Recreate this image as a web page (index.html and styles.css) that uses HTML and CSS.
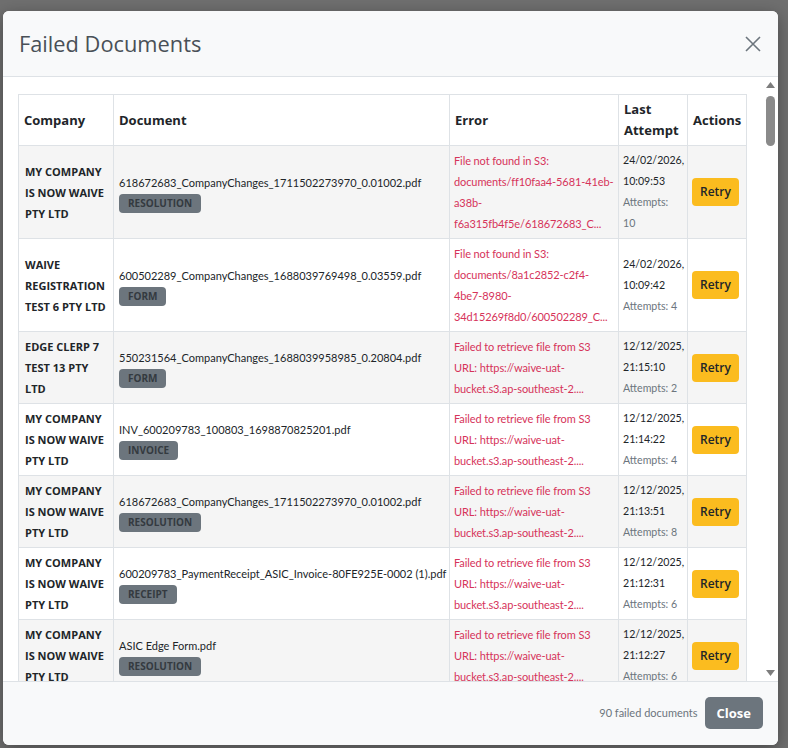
FILE: index.html
```html
<!DOCTYPE html>
<html lang="en">
<head>
    <meta charset="UTF-8">
    <title>Failed Documents</title>
    <link rel="stylesheet" href="styles.css">
</head>
<body>
    <div class="modal">
        <div class="modal_header">
            <h5>Failed Documents</h5>
            <svg class="close_x" width="16" height="16" viewBox="0 0 16 16">
                <path d="M1 1L15 15M15 1L1 15" stroke="#6c757d" stroke-width="1.6" fill="none"/>
            </svg>
        </div>

        <div class="modal_body">
            <div class="scroll">
                <table>
                    <colgroup>
                        <col style="width:95px">
                        <col style="width:336px">
                        <col style="width:169px">
                        <col style="width:69px">
                        <col style="width:59px">
                    </colgroup>
                    <thead>
                        <tr>
                            <th>Company</th>
                            <th>Document</th>
                            <th>Error</th>
                            <th>Last Attempt</th>
                            <th>Actions</th>
                        </tr>
                    </thead>
                    <tbody>
                        <tr>
                            <td class="company">MY COMPANY IS NOW WAIVE PTY LTD</td>
                            <td class="doc">618672683_CompanyChanges_1711502273970_0.01002.pdf<span class="badge">Resolution</span></td>
                            <td class="err">File not found in S3: documents/ff10faa4-5681-41eb-a38b-f6a315fb4f5e/618672683_C...</td>
                            <td class="when">24/02/2026, 10:09:53<div class="attempts">Attempts: 10</div></td>
                            <td><button class="retry">Retry</button></td>
                        </tr>
                        <tr>
                            <td class="company">WAIVE REGISTRATION TEST 6 PTY LTD</td>
                            <td class="doc">600502289_CompanyChanges_1688039769498_0.03559.pdf<span class="badge">Form</span></td>
                            <td class="err">File not found in S3: documents/8a1c2852-c2f4-4be7-8980-34d15269f8d0/600502289_C...</td>
                            <td class="when">24/02/2026, 10:09:42<div class="attempts">Attempts: 4</div></td>
                            <td><button class="retry">Retry</button></td>
                        </tr>
                        <tr>
                            <td class="company">EDGE CLERP 7 TEST 13 PTY LTD</td>
                            <td class="doc">550231564_CompanyChanges_1688039958985_0.20804.pdf<span class="badge">Form</span></td>
                            <td class="err">Failed to retrieve file from S3 URL: https://waive-uat-bucket.s3.ap-southeast-2....</td>
                            <td class="when">12/12/2025, 21:15:10<div class="attempts">Attempts: 2</div></td>
                            <td><button class="retry">Retry</button></td>
                        </tr>
                        <tr>
                            <td class="company">MY COMPANY IS NOW WAIVE PTY LTD</td>
                            <td class="doc">INV_600209783_100803_1698870825201.pdf<span class="badge">Invoice</span></td>
                            <td class="err">Failed to retrieve file from S3 URL: https://waive-uat-bucket.s3.ap-southeast-2....</td>
                            <td class="when">12/12/2025, 21:14:22<div class="attempts">Attempts: 4</div></td>
                            <td><button class="retry">Retry</button></td>
                        </tr>
                        <tr>
                            <td class="company">MY COMPANY IS NOW WAIVE PTY LTD</td>
                            <td class="doc">618672683_CompanyChanges_1711502273970_0.01002.pdf<span class="badge">Resolution</span></td>
                            <td class="err">Failed to retrieve file from S3 URL: https://waive-uat-bucket.s3.ap-southeast-2....</td>
                            <td class="when">12/12/2025, 21:13:51<div class="attempts">Attempts: 8</div></td>
                            <td><button class="retry">Retry</button></td>
                        </tr>
                        <tr>
                            <td class="company">MY COMPANY IS NOW WAIVE PTY LTD</td>
                            <td class="doc">600209783_PaymentReceipt_ASIC_Invoice-80FE925E-0002 (1).pdf<span class="badge">Receipt</span></td>
                            <td class="err">Failed to retrieve file from S3 URL: https://waive-uat-bucket.s3.ap-southeast-2....</td>
                            <td class="when">12/12/2025, 21:12:31<div class="attempts">Attempts: 6</div></td>
                            <td><button class="retry">Retry</button></td>
                        </tr>
                        <tr>
                            <td class="company">MY COMPANY IS NOW WAIVE PTY LTD</td>
                            <td class="doc">ASIC Edge Form.pdf<span class="badge">Resolution</span></td>
                            <td class="err">Failed to retrieve file from S3 URL: https://waive-uat-bucket.s3.ap-southeast-2....</td>
                            <td class="when">12/12/2025, 21:12:27<div class="attempts">Attempts: 6</div></td>
                            <td><button class="retry">Retry</button></td>
                        </tr>
                    </tbody>
                </table>
            </div>
            <div class="scrollbar">
                <svg width="15" height="12" viewBox="0 0 15 12"><path d="M3 11L7.5 5L12 11Z" fill="#7d7d7d"/></svg>
                <div class="thumb"></div>
                <div class="spacer"></div>
                <svg width="15" height="12" viewBox="0 0 15 12"><path d="M3 3L12 3L7.5 9Z" fill="#7d7d7d"/></svg>
            </div>
        </div>

        <div class="modal_footer">
            <span class="count">90 failed documents</span>
            <button class="close_btn">Close</button>
        </div>
    </div>
</body>
</html>
```

FILE: styles.css
```css
*{
    box-sizing: border-box;
}

body{
    margin: 0;
    background-color: #6f6f6f;
    font-family: Lato, "Open Sans", sans-serif;
    color: #212529;
    height: 100vh;
    overflow: hidden;
}

.modal{
    margin: 11px 0 0 3px;
    width: 775px;
    height: 734px;
    background-color: #fff;
    border-radius: 6px;
    overflow: hidden;
    display: flex;
    flex-direction: column;
    box-shadow: 0 4px 16px rgba(0,0,0,0.35);
}

.modal_header{
    display: flex;
    align-items: center;
    justify-content: space-between;
    padding: 16px 17px 16px 16px;
    background-color: #f8f9fa;
    border-bottom: 1px solid #dee2e6;
}

.modal_header h5{
    margin: 0;
    font-family: "Open Sans", sans-serif;
    font-size: 21.8px;
    line-height: 33px;
    font-weight: 400;
    color: #495057;
}

.close_x{
    display: block;
}

.modal_body{
    flex: 1;
    display: flex;
    min-height: 0;
}

.scroll{
    flex: 1;
    overflow: hidden;
    padding: 17px 17px 0 15px;
}

.scrollbar{
    width: 15px;
    display: flex;
    flex-direction: column;
    align-items: center;
    padding-bottom: 2px;
}

.scrollbar svg{
    display: block;
}

.thumb{
    margin-top: 7px;
    width: 9px;
    height: 50px;
    border-radius: 5px;
    background-color: #8a8a8a;
}

.spacer{
    flex: 1;
}

table{
    width: 728px;
    table-layout: fixed;
    border-collapse: collapse;
    font-size: 11px;
    line-height: 21px;
}

th, td{
    border: 1px solid #dee2e6;
    padding: 4px 4px;
    text-align: left;
    vertical-align: middle;
}

thead th{
    font-family: "Open Sans", sans-serif;
    font-size: 13px;
    font-weight: 700;
    background-color: #fff;
    padding-left: 5px;
}

tbody tr:nth-child(odd){
    background-color: #f5f5f5;
}

.company{
    font-family: "Open Sans", sans-serif;
    font-weight: 700;
    padding-left: 6px;
}

.doc{
    padding-left: 5px;
    white-space: nowrap;
}

.err{
    color: #d6335a;
    padding-right: 3px;
    letter-spacing: -0.1px;
    overflow-wrap: anywhere;
}

.when{
    font-size: 10.6px;
}

.badge{
    display: block;
    width: fit-content;
    margin-top: 1px;
    padding: 3px 9px;
    font-family: "Open Sans", sans-serif;
    font-size: 10px;
    line-height: 13px;
    font-weight: 700;
    text-transform: uppercase;
    color: #343a40;
    background-color: #6c757d;
    border-radius: 4px;
}

.attempts{
    color: #6c757d;
}

.retry{
    font-family: "Open Sans", sans-serif;
    font-size: 12px;
    line-height: 18px;
    font-weight: 600;
    color: #212529;
    background-color: #fbbc1f;
    border: none;
    border-radius: 4px;
    padding: 5px 8px;
}

.modal_footer{
    height: 64px;
    display: flex;
    align-items: center;
    justify-content: flex-end;
    gap: 7px;
    padding: 0 15px 1px 16px;
    background-color: #f8f9fa;
    border-top: 1px solid #dee2e6;
}

.count{
    font-size: 11px;
    line-height: 16px;
    color: #6c757d;
}

.close_btn{
    font-family: "Open Sans", sans-serif;
    font-size: 13px;
    line-height: 18px;
    font-weight: 700;
    color: #fff;
    background-color: #6c757d;
    border: none;
    border-radius: 5px;
    padding: 7px 12px;
}
```
